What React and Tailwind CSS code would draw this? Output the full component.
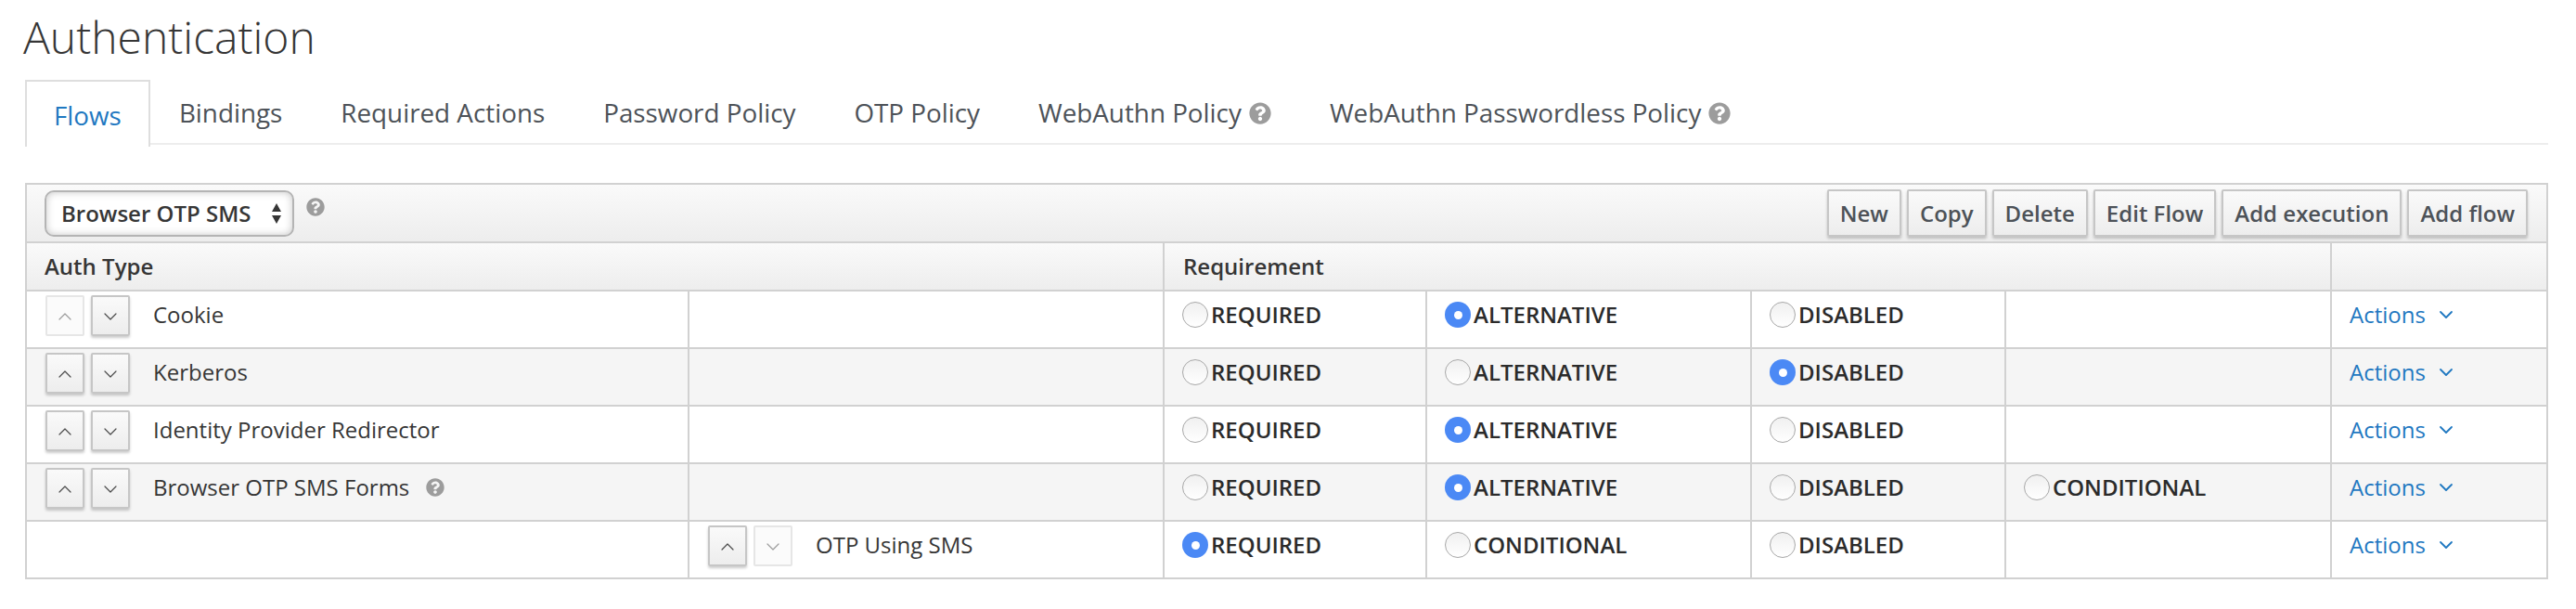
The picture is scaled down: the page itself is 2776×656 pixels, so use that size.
import { ChevronUp, ChevronDown } from 'lucide-react';
import { FaQuestionCircle } from 'react-icons/fa';

const tabs = [
  { label: 'Flows', active: true },
  { label: 'Bindings' },
  { label: 'Required Actions' },
  { label: 'Password Policy' },
  { label: 'OTP Policy' },
  { label: 'WebAuthn Policy', help: true },
  { label: 'WebAuthn Passwordless Policy', help: true },
];

const toolbarButtons = ['New', 'Copy', 'Delete', 'Edit Flow', 'Add execution', 'Add flow'];

const rows = [
  { name: 'Cookie', upDisabled: true, options: ['REQUIRED', 'ALTERNATIVE', 'DISABLED'], selected: 'ALTERNATIVE' },
  { name: 'Kerberos', options: ['REQUIRED', 'ALTERNATIVE', 'DISABLED'], selected: 'DISABLED' },
  { name: 'Identity Provider Redirector', options: ['REQUIRED', 'ALTERNATIVE', 'DISABLED'], selected: 'ALTERNATIVE' },
  { name: 'Browser OTP SMS Forms', help: true, options: ['REQUIRED', 'ALTERNATIVE', 'DISABLED', 'CONDITIONAL'], selected: 'ALTERNATIVE' },
  { name: 'OTP Using SMS', nested: true, downDisabled: true, options: ['REQUIRED', 'CONDITIONAL', 'DISABLED'], selected: 'REQUIRED' },
];

const Radio = ({ label, checked }) => (
  <div className="flex items-center gap-[3px] pl-[19px] pt-[11px]">
    {checked ? (
      <span className="flex h-[28px] w-[28px] items-center justify-center rounded-full bg-[#4b89f5]">
        <span className="h-[9px] w-[9px] rounded-full bg-white" />
      </span>
    ) : (
      <span className="h-[28px] w-[28px] rounded-full border border-[#a8a8a8] bg-gradient-to-b from-[#f0f0f0] to-white" />
    )}
    <span className="text-[24px] leading-[28px] font-semibold text-[#2b2b2b]">{label}</span>
  </div>
);

const ArrowButton = ({ disabled, children }) => (
  <button
    type="button"
    className={
      disabled
        ? 'flex h-[44px] w-[42px] items-center justify-center rounded-[2px] border-2 border-[#e6e6e6] bg-[#fbfbfb] pt-[2px] text-[#9c9c9c]'
        : 'flex h-[44px] w-[42px] items-center justify-center rounded-[2px] border-2 border-[#c6c6c6] bg-gradient-to-b from-[#fafafa] to-[#ededed] pt-[2px] text-[#4a4a4a] shadow-[0_2px_3px_rgba(0,0,0,0.2)]'
    }
  >
    {children}
  </button>
);

const FlowName = ({ row }) => (
  <div className="flex h-[60px] items-start pl-[20px] pt-[4px]">
    <div className="flex gap-[7px]">
      <ArrowButton disabled={row.upDisabled}>
        <ChevronUp size={24} strokeWidth={1.2} />
      </ArrowButton>
      <ArrowButton disabled={row.downDisabled}>
        <ChevronDown size={24} strokeWidth={1.2} />
      </ArrowButton>
    </div>
    <span className="ml-[25px] pt-[5px] text-[24px] leading-[32px] text-[#363636]">{row.name}</span>
    {row.help && <FaQuestionCircle size={20} className="ml-[18px] mt-[11px] text-[#9c9c9c]" />}
  </div>
);

const App = () => {
  return (
    <div className="min-h-[656px] bg-white pl-[27px] pr-[30px] font-['Open_Sans',sans-serif] text-[#363636]">
      <h1 className="-ml-[2px] pt-[9px] text-[48px] leading-[62px] font-light text-[#363636]">Authentication</h1>

      {/* Tabs */}
      <div className="mt-[15px] flex h-[70px] gap-[3px] border-b-2 border-[#ededed]">
        {tabs.map((tab) => (
          <div
            key={tab.label}
            className={
              tab.active
                ? 'relative -mb-[2px] -mr-[2px] flex h-[72px] items-center border-2 border-b-0 border-[#dedede] bg-white px-[29px] pt-[3px] text-[27.8px] text-[#1f78c1]'
                : 'flex items-center gap-[8px] px-[30px] pt-[3px] text-[27.8px] text-[#4d5258]'
            }
          >
            {tab.label}
            {tab.help && <FaQuestionCircle size={24} className="text-[#9c9c9c]" />}
          </div>
        ))}
      </div>

      <div className="mt-[41px] border-2 border-[#d1d1d1] border-b-0">
        {/* Toolbar */}
        <div className="flex h-[63px] items-center justify-between border-b-2 border-[#d1d1d1] bg-gradient-to-b from-[#fafafa] to-[#ededed] pl-[19px] pr-[20px]">
          <div className="flex items-start">
            <div className="flex h-[50px] w-[269px] items-center justify-between rounded-[10px] border-2 border-[#b4b4b4] bg-white px-[16px] text-[24px] font-semibold text-[#363636] shadow-[inset_0_0_9px_rgba(0,0,0,0.22)]">
              Browser OTP SMS
              <svg width="12" height="24" viewBox="0 0 12 24" className="mr-[-5px] shrink-0 text-[#363636]">
                <path d="M6 1 L11 10 H1 Z M6 23 L11 14 H1 Z" fill="currentColor" />
              </svg>
            </div>
            <FaQuestionCircle size={20} className="ml-[13px] mt-[8px] text-[#9c9c9c]" />
          </div>
          <div className="flex gap-[6px]">
            {toolbarButtons.map((label) => (
              <button
                key={label}
                type="button"
                className="h-[51px] rounded-[2px] border-2 border-[#c6c6c6] bg-gradient-to-b from-[#fafafa] to-[#ededed] px-[12px] text-[24px] font-semibold text-[#4d5258] shadow-[0_2px_3px_rgba(0,0,0,0.2)]"
              >
                {label}
              </button>
            ))}
          </div>
        </div>

        <table className="w-full table-fixed border-collapse">
          <colgroup>
            <col className="w-[713px]" />
            <col className="w-[512px]" />
            <col className="w-[283px]" />
            <col className="w-[350px]" />
            <col className="w-[274px]" />
            <col className="w-[351px]" />
            <col />
          </colgroup>
          <thead>
            <tr className="h-[51px] bg-gradient-to-b from-[#fafafa] to-[#ededed] text-left text-[24px] font-semibold text-[#363636]">
              <th colSpan={2} className="border-b-2 border-[#d1d1d1] pl-[19px] font-semibold">Auth Type</th>
              <th colSpan={4} className="border-x-2 border-b-2 border-[#d1d1d1] pl-[20px] font-semibold">Requirement</th>
              <th className="border-b-2 border-[#d1d1d1]" />
            </tr>
          </thead>
          <tbody>
            {rows.map((row, i) => (
              <tr key={row.name} className={i % 2 === 1 ? 'bg-[#f5f5f5]' : 'bg-white'}>
                <td className={row.nested ? 'border-b-2 border-[#d1d1d1] p-0' : 'border-2 border-l-0 border-t-0 border-[#d1d1d1] p-0'}>
                  {!row.nested && <FlowName row={row} />}
                </td>
                <td className="border-2 border-t-0 border-[#d1d1d1] p-0">
                  {row.nested && <FlowName row={row} />}
                </td>
                {[0, 1, 2, 3].map((n) => (
                  <td key={n} className="border-2 border-t-0 border-[#d1d1d1] p-0 align-top">
                    {row.options[n] && <Radio label={row.options[n]} checked={row.options[n] === row.selected} />}
                  </td>
                ))}
                <td className="border-2 border-r-0 border-t-0 border-[#d1d1d1] p-0 align-top">
                  <div className="flex items-center gap-[10px] pl-[19px] pt-[9px] text-[24px] leading-[32px] text-[#1f78c1]">
                    Actions
                    <ChevronDown size={24} strokeWidth={1.8} />
                  </div>
                </td>
              </tr>
            ))}
          </tbody>
        </table>
      </div>
    </div>
  );
};

export default App;
